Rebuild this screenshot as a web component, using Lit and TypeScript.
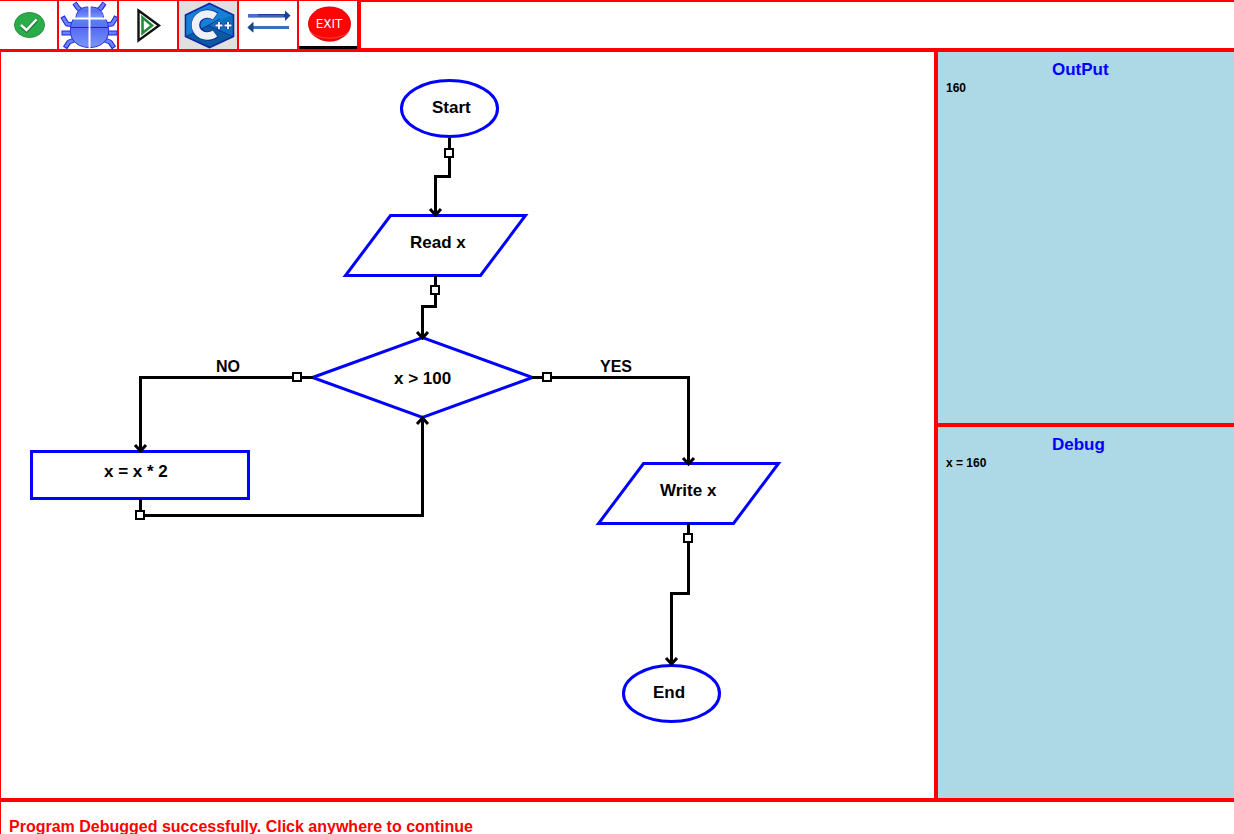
import { LitElement, html, svg, css } from "lit";
import { customElement, property, state } from "lit/decorators.js";

type Point = [number, number];

interface FlowNode {
  kind: "terminal" | "io" | "decision" | "process";
  x: number;
  y: number;
  label: string;
  labelX: number;
  labelY: number;
}

interface FlowLink {
  path: Point[];
  handle: Point;
  up?: boolean;
}

const NODES: FlowNode[] = [
  { kind: "terminal", x: 449.5, y: 108.5, label: "Start", labelX: 432, labelY: 113 },
  { kind: "io", x: 435.5, y: 245.5, label: "Read x", labelX: 410, labelY: 248 },
  { kind: "decision", x: 422.5, y: 377.5, label: "x > 100", labelX: 394, labelY: 384 },
  { kind: "process", x: 140, y: 475, label: "x = x * 2", labelX: 104, labelY: 477 },
  { kind: "io", x: 688.5, y: 493.5, label: "Write x", labelX: 660, labelY: 496 },
  { kind: "terminal", x: 671.5, y: 693.5, label: "End", labelX: 653, labelY: 698 },
];

const LINKS: FlowLink[] = [
  { path: [[449.5, 138], [449.5, 176.5], [435.5, 176.5], [435.5, 215]], handle: [449, 153] },
  { path: [[435.5, 276], [435.5, 306.5], [422.5, 306.5], [422.5, 338]], handle: [435, 290] },
  { path: [[313, 377.5], [140.5, 377.5], [140.5, 451]], handle: [297, 377] },
  { path: [[532, 377.5], [688.5, 377.5], [688.5, 464]], handle: [547, 377] },
  { path: [[140.5, 499], [140.5, 515.5], [422.5, 515.5], [422.5, 418]], handle: [140, 515], up: true },
  { path: [[688.5, 523], [688.5, 593.5], [671.5, 593.5], [671.5, 664]], handle: [688, 538] },
];

const checkIcon = html`<svg viewBox="0 1 57 48" aria-hidden="true">
  <ellipse cx="29.500" cy="25" rx="15" ry="12.500" fill="#2bac4b" stroke="#258f3c" />
  <path d="M21.500 26l5 4.500L36.500 20.500" fill="none" stroke="#1c7a35" stroke-width="4" />
  <path d="M21 25l5.500 5L36.500 19.500" fill="none" stroke="#fff" stroke-width="2.400" />
</svg>`;

const bugIcon = html`<svg viewBox="59 1 58 48" aria-hidden="true">
  <defs>
    <linearGradient id="shell" x1="0" y1="0" x2="0" y2="1">
      <stop offset="0" stop-color="#5a82ef" />
      <stop offset="0.350" stop-color="#5a6cf4" />
      <stop offset="1" stop-color="#7898fb" />
    </linearGradient>
  </defs>
  <g fill="none" stroke-linejoin="round">
    <path
      stroke="#2424d8"
      stroke-width="5"
      d="M74.500 3l3.500 5 4 3M104.500 3l-3.500 5-4 3M62.500 16.500l4.500 7.500 8 1M116.500 16.500l-4.500 7.500-8 1M61.500 33h13M117.500 33h-13M65 48l4-6 8-3M114 48l-4-6-8-3"
    />
    <path
      stroke="#6385f6"
      stroke-width="3"
      d="M75 3.500l3 4.500 4 3M104 3.500l-3 4.500-4 3M63 17.500l4 6.500 8 1M116 17.500l-4 6.500-8 1M62.500 33h12M116.500 33h-12M65.500 47l3.500-5 8-3M113.500 47l-3.500-5-8-3"
    />
  </g>
  <g fill="url(#shell)">
    <path d="M88.500 7C81 7 76.500 11 76 17.500h12.500zM90.500 7c7.500 0 12 4 12.500 10.500H90.500z" />
    <path d="M88.500 19.500H73C69.500 26 69.500 35 73 40c4 5 8.500 7 15.500 7.500zM90.500 19.500H106c3.500 6.500 3.500 15.500 0 20.500-4 5-8.500 7-15.500 7.500z" />
  </g>
  <path
    fill="none"
    stroke="#2c2ce0"
    d="M88 7C81 7 76.500 11 76 17.500M91 7c7.500 0 12 4 12.500 10.500M73 19.500C69.500 26 69.500 35 73 40c4 5 8.500 7 15.500 7.500M106 19.500c3.500 6.500 3.500 15.500 0 20.500-4 5-8.500 7-15.500 7.500"
  />
  <path d="M71 27.500h17.500M90.500 27.500H108" stroke="#2424b8" />
</svg>`;

const playIcon = html`<svg viewBox="119 1 58 48" aria-hidden="true">
  <path d="M138.500 10.500L159 25.500 138.500 40.500z" fill="#fff" stroke="#111" stroke-width="2.400" />
  <path d="M142.500 17.500v15.500L152 25.500z" fill="#fff" stroke="#238a35" stroke-width="2.600" />
</svg>`;

const cppIcon = html`<svg viewBox="179 1 58 48" aria-hidden="true">
  <path d="M209.500 3.500L233.500 15v21.500L209.500 47.500 185.500 36.500V15z" fill="#1482d2" />
  <path d="M208 25.500L185.500 36.500 209.500 47.500 233.500 36.500z" fill="#075b9e" />
  <path d="M208 25.500L233.500 14.500v22z" fill="#0c70bd" />
  <path d="M208 25.500l12-6.500M208 25.500l25 11M208 25.500l-22 11" stroke="#1430a0" />
  <path d="M209.500 3.500L233.500 15v21.500L209.500 47.500 185.500 36.500V15z" fill="none" stroke="#1228a0" stroke-width="1.600" />
  <path d="M215.500 16.500A12 11 0 1 0 215.500 33.500" fill="none" stroke="#15269a" stroke-width="9.200" />
  <path d="M215 16.500A12 11 0 1 0 215 33.500" fill="none" stroke="#eef1f8" stroke-width="7.400" />
  <path d="M215 25.500h8M219 22v7M224 25.500h8M228 22v7" stroke="#1432a0" stroke-width="3.400" />
  <path d="M215.500 25.500h7M219 22v7M224.500 25.500h7M228 22v7" stroke="#fff" stroke-width="1.800" />
</svg>`;

const swapIcon = html`<svg viewBox="239 1 58 48" aria-hidden="true">
  <path d="M248 14h37v-3.500l5.500 5-5.500 5.500v-3.500h-37z" fill="#1e3f96" />
  <path d="M248 15.500h10" stroke="#4472c4" stroke-width="3" />
  <path d="M258 16h26" stroke="#4472c4" stroke-width="1.400" />
  <path d="M253 26h36v3h-36v3.500l-5.500-5 5.500-5.500z" fill="#3f6fc4" />
  <path d="M253.500 22v10.500l-6-5z" fill="#174880" />
</svg>`;

const exitIcon = html`<svg viewBox="299 1 58 48" aria-hidden="true">
  <rect x="299" y="46" width="58" height="3" fill="#080000" />
  <ellipse cx="330" cy="27" rx="17.500" ry="15" fill="#f4a9a6" />
  <ellipse cx="329.500" cy="24" rx="21.500" ry="17.500" fill="#e80808" />
  <ellipse cx="329.500" cy="22.500" rx="20.500" ry="15.500" fill="#fb0505" />
  <path d="M310 31c7 9.500 32 9.500 39 0" fill="none" stroke="#ff5048" stroke-width="0.800" />
  <text class="exit" x="329" y="28" text-anchor="middle">EXIT</text>
</svg>`;

@customElement("flow-toolbar")
class FlowToolbar extends LitElement {
  static styles = css`
    :host {
      display: flex;
      align-items: stretch;
      height: 52px;
    }
    .tool {
      flex: none;
      box-sizing: border-box;
      width: 60px;
      margin: 0;
      padding: 0;
      display: grid;
      border: solid #f00;
      border-width: 1px 2px 3px 0;
      border-radius: 0;
      background: #fff;
      cursor: pointer;
      overflow: hidden;
    }
    .tool:first-child {
      width: 59px;
    }
    .tool.shaded {
      background: #e0e0e0;
    }
    .tool.last {
      width: 62px;
      border-right-width: 4px;
    }
    svg {
      display: block;
      width: 100%;
      height: 48px;
    }
    .exit {
      font: 12px "DejaVu Sans", sans-serif;
      fill: #fff;
    }
    .rest {
      flex: 1;
      border: solid #f00;
      border-width: 2px 0 4px;
    }
  `;

  render() {
    return html`
      <button class="tool" aria-label="Check">${checkIcon}</button>
      <button class="tool" aria-label="Debug">${bugIcon}</button>
      <button class="tool" aria-label="Run">${playIcon}</button>
      <button class="tool shaded" aria-label="Generate C++">${cppIcon}</button>
      <button class="tool" aria-label="Switch">${swapIcon}</button>
      <button class="tool last" aria-label="Exit">${exitIcon}</button>
      <div class="rest"></div>
    `;
  }
}

@customElement("flow-chart")
class FlowChart extends LitElement {
  static styles = css`
    :host {
      display: block;
      overflow: hidden;
      border-left: 1px solid #f00;
      background: #fff;
    }
    svg {
      display: block;
      width: 100%;
      height: 100%;
    }
    .shape {
      fill: #fff;
      stroke: #00f;
      stroke-width: 3px;
    }
    .link {
      fill: none;
      stroke: #000;
      stroke-width: 3px;
    }
    .handle {
      fill: #fff;
      stroke: #000;
      stroke-width: 2px;
    }
    .label {
      font: bold 17px "Liberation Sans", Arial, sans-serif;
      fill: #000;
    }
    .branch {
      font-size: 16px;
    }
  `;

  private shape({ kind, x, y }: FlowNode) {
    switch (kind) {
      case "terminal":
        return svg`<ellipse class="shape" cx=${x} cy=${y} rx="48" ry="28" />`;
      case "io":
        return svg`<path class="shape" d="M${x - 45} ${y - 30}h135l-45 60h-135z" />`;
      case "decision":
        return svg`<path class="shape" d="M${x - 110} ${y}l110 -40 110 40 -110 40z" />`;
      case "process":
        return svg`<rect class="shape" x=${x - 108.5} y=${y - 23.5} width="217" height="47" />`;
    }
  }

  private link({ path, handle, up }: FlowLink) {
    const [tipX, tipY] = path[path.length - 1];
    const back = up ? 6 : -6;
    return svg`
      <polyline class="link" points=${path.map((p) => p.join(",")).join(" ")} />
      <path class="link" d="M${tipX - 5.5} ${tipY + back}l5.5 ${-back} 5.5 ${back}" />
      <rect class="handle" x=${handle[0] - 4} y=${handle[1] - 4} width="8" height="8" />
    `;
  }

  render() {
    return html`<svg role="img" aria-label="Flowchart">
      <g transform="translate(-1 -52)">
        ${NODES.map((n) => this.shape(n))}
        ${LINKS.map((l) => this.link(l))}
        ${NODES.map((n) => svg`<text class="label" x=${n.labelX} y=${n.labelY}>${n.label}</text>`)}
        <text class="label branch" x="216" y="372">NO</text>
        <text class="label branch" x="600" y="372">YES</text>
      </g>
    </svg>`;
  }
}

@customElement("flow-panel")
class FlowPanel extends LitElement {
  @property() heading = "";
  @property({ attribute: false }) lines: string[] = [];

  static styles = css`
    :host {
      display: block;
      padding: 8px;
      background: #add8e6;
      color: #000;
      overflow: hidden;
    }
    .heading {
      margin: 0;
      padding-left: 106px;
      font-size: 17px;
      line-height: 20px;
      color: #00f;
    }
    .line {
      margin: 0;
      font-size: 12px;
      line-height: 16px;
      font-weight: bold;
    }
  `;

  render() {
    return html`
      <h2 class="heading">${this.heading}</h2>
      ${this.lines.map((line) => html`<p class="line">${line}</p>`)}
    `;
  }
}

@customElement("app-root")
class AppRoot extends LitElement {
  @state() private output = ["160"];
  @state() private watch = ["x = 160"];
  @state() private message = "Program Debugged successfully. Click anywhere to continue";

  static styles = css`
    :host {
      display: grid;
      grid-template-rows: auto minmax(0, 1fr) auto;
      height: 100vh;
      overflow: hidden;
      background: #fff;
      font-family: "Liberation Sans", Arial, sans-serif;
    }
    .workspace {
      display: grid;
      grid-template-columns: minmax(0, 1fr) 296px;
      column-gap: 4px;
      background: #f00;
    }
    .side {
      display: grid;
      grid-template-rows: minmax(0, 1fr) minmax(0, 1fr);
      row-gap: 4px;
    }
    .status {
      box-sizing: border-box;
      height: 36px;
      padding: 14px 8px 0;
      border: solid #f00;
      border-width: 4px 0 0 1px;
      overflow: hidden;
      color: #f00;
      font-size: 16px;
      line-height: 22px;
      font-weight: bold;
      white-space: nowrap;
    }
  `;

  render() {
    return html`
      <flow-toolbar></flow-toolbar>
      <main class="workspace">
        <flow-chart></flow-chart>
        <aside class="side">
          <flow-panel heading="OutPut" .lines=${this.output}></flow-panel>
          <flow-panel heading="Debug" .lines=${this.watch}></flow-panel>
        </aside>
      </main>
      <footer class="status" role="status">${this.message}</footer>
    `;
  }
}
